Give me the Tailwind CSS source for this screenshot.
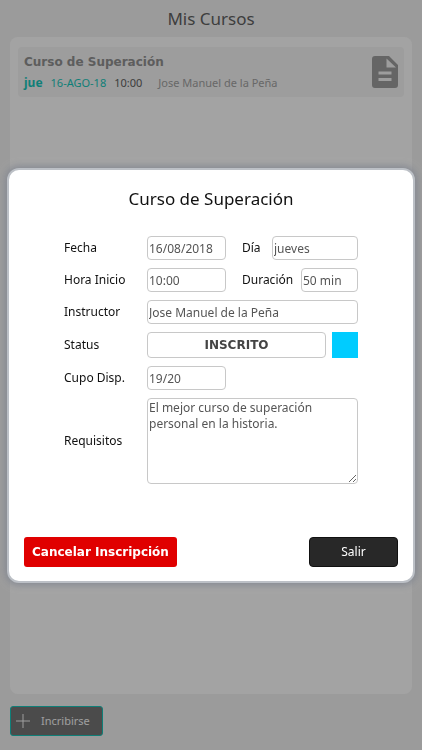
<!DOCTYPE html>
<html lang="es">
<head>
    <meta charset="UTF-8">
    <meta name="viewport" content="width=device-width, initial-scale=1">
    <title>Mis Cursos</title>
    <script src="https://cdn.jsdelivr.net/npm/@tailwindcss/browser@4"></script>
</head>
<body class="bg-[#efefef] font-['Noto_Sans',sans-serif] text-xs">
    <!-- Course list -->
    <div class="flex h-dvh flex-col px-[10px] pb-[14px]">
        <h1 class="py-[5px] text-center text-[17px] leading-[27px] text-[#606060]">Mis Cursos</h1>

        <main class="flex-1 rounded-lg bg-[#fbfbfb] p-2 pt-[10px]">
            <article class="flex items-center justify-between rounded-sm bg-[#f1f1f1] px-[6px] py-[5px]">
                <div>
                    <h2 class="font-['DejaVu_Sans',sans-serif] leading-5 font-bold text-[#8f8f8f]">Curso de Superación</h2>
                    <p class="flex pt-[2px] text-[11px] leading-[18px]">
                        <span class="text-xs leading-[18px] font-bold text-[#18c4b8]">jue</span>
                        <span class="ml-2 text-[#18c4b8]">16-AGO-18</span>
                        <span class="ml-2 text-[#606060]">10:00</span>
                        <span class="ml-4 text-[#a0a0a0]">Jose Manuel de la Peña</span>
                    </p>
                </div>
                <button type="button" aria-label="Ver detalle">
                    <svg class="h-[38px] w-[26px] fill-[#9b9b9b]" viewBox="0 0 26 38">
                        <path fill-rule="evenodd" d="M3 3h14l9 9v20a3 3 0 0 1-3 3H3a3 3 0 0 1-3-3V6a3 3 0 0 1 3-3zM14.500 5.500v9H24zM6.500 18.500v3h13v-3zM6.500 25v3h13v-3z"/>
                    </svg>
                </button>
            </article>
        </main>

        <button type="button" class="mt-3 flex h-[30px] items-center gap-[11px] self-start rounded-[3px] border border-[#18c4b8] bg-[#737373] pr-3 pl-[5px] text-[11px] text-[#f4f4f4]">
            <svg class="size-[14px] stroke-current" viewBox="0 0 14 14" fill="none">
                <path d="M7 0v14M0 7h14"/>
            </svg>
            Incribirse
        </button>
    </div>

    <!-- Course detail -->
    <div class="fixed inset-0 flex items-center justify-center bg-black/35 px-[7px]">
        <form role="dialog" aria-labelledby="titulo" class="w-full rounded-xl border-2 border-[#bcc0c6] bg-white px-[15px] pt-[15px] pb-[14px] text-[#111] shadow-[0_0_7px_2px_#858992]">
            <h2 id="titulo" class="text-center text-[17px] leading-7">Curso de Superación</h2>

            <div class="mx-auto mt-[23px] grid w-[294px] grid-cols-[83px_1fr] items-center gap-y-2">
                <label for="fecha" class="pt-px">Fecha</label>
                <div class="flex items-center">
                    <input id="fecha" value="16/08/2018" readonly class="h-6 w-[79px] rounded border border-[#c8c8c8] px-px pt-px text-[#555]">
                    <label for="dia" class="mr-auto ml-4 pt-px">Día</label>
                    <input id="dia" value="jueves" readonly class="h-6 w-[86px] rounded border border-[#c8c8c8] px-px pt-px text-[#555]">
                </div>

                <label for="hora" class="pt-px">Hora Inicio</label>
                <div class="flex items-center">
                    <input id="hora" value="10:00" readonly class="h-6 w-[79px] rounded border border-[#c8c8c8] px-px pt-px text-[#555]">
                    <label for="duracion" class="mr-auto ml-4 pt-px">Duración</label>
                    <input id="duracion" value="50 min" readonly class="h-6 w-[57px] rounded border border-[#c8c8c8] px-px pt-px text-[#555]">
                </div>

                <label for="instructor" class="pt-px">Instructor</label>
                <input id="instructor" value="Jose Manuel de la Peña" readonly class="h-6 w-full rounded border border-[#c8c8c8] px-px pt-px text-[#555]">

                <label for="status" class="pt-px">Status</label>
                <div class="flex gap-[6px]">
                    <input id="status" value="INSCRITO" readonly class="h-[26px] min-w-0 flex-1 rounded border border-[#c8c8c8] text-center font-['DejaVu_Sans',sans-serif] font-bold text-[#444]">
                    <span class="size-[26px] bg-[#00ccff]"></span>
                </div>

                <label for="cupo" class="pt-px">Cupo Disp.</label>
                <input id="cupo" value="19/20" readonly class="h-6 w-[79px] rounded border border-[#c8c8c8] px-px pt-px text-[#555]">

                <label for="requisitos" class="pt-px">Requisitos</label>
                <textarea id="requisitos" readonly class="block h-[86px] w-full rounded border border-[#c8c8c8] px-px pt-px leading-4 text-[#555]">El mejor curso de superación personal en la historia.</textarea>
            </div>

            <div class="mt-[53px] flex justify-between">
                <button type="button" class="h-[30px] rounded-[3px] bg-[#e00000] px-2 font-['DejaVu_Sans',sans-serif] font-bold text-white">Cancelar Inscripción</button>
                <button type="button" class="h-[30px] w-[89px] rounded border border-[#111] bg-[#282828] text-white">Salir</button>
            </div>
        </form>
    </div>
</body>
</html>
